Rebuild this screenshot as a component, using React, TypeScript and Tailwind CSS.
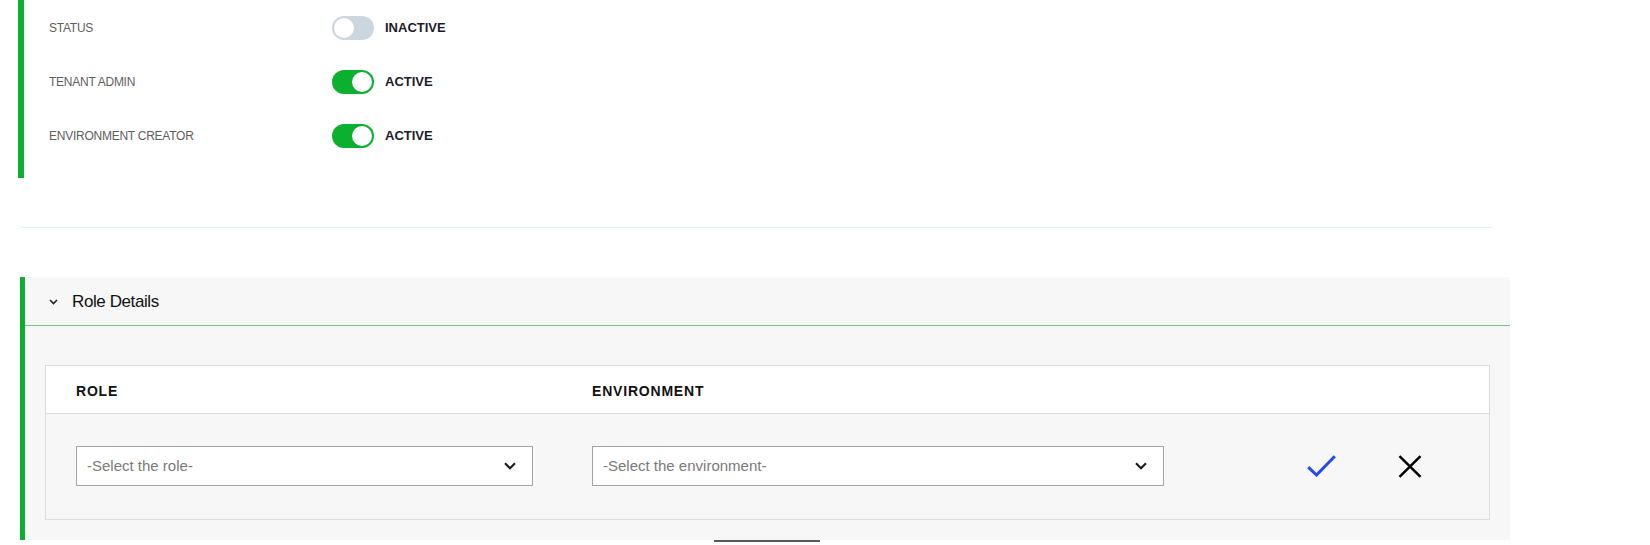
import React from "react";

type FlagRow = { label: string; active: boolean };

const flags: FlagRow[] = [
  { label: "STATUS", active: false },
  { label: "TENANT ADMIN", active: true },
  { label: "ENVIRONMENT CREATOR", active: true },
];

function Toggle({ on }: { on: boolean }) {
  return (
    <div
      className={
        on
          ? "w-[42px] h-[24px] rounded-full bg-[#0cb030] p-[2px] flex justify-end"
          : "w-[42px] h-[24px] rounded-full bg-[#cdd5df] p-[2px] flex justify-start"
      }
    >
      <div className="w-[20px] h-[20px] rounded-full bg-white" />
    </div>
  );
}

function SelectChevron() {
  return (
    <svg width="12" height="8" viewBox="0 0 12 8" fill="none">
      <path d="M1 1.2 L6 6.2 L11 1.2" stroke="#1a1a1a" strokeWidth="2.1" />
    </svg>
  );
}

function FakeSelect({ placeholder, width }: { placeholder: string; width: string }) {
  return (
    <div
      className={`${width} h-[40px] border border-[#a3a3a3] bg-white flex items-center justify-between pl-[10px] pr-[16px]`}
    >
      <span className="mt-[1px] text-[15px] text-[#7a7a7a]">{placeholder}</span>
      <SelectChevron />
    </div>
  );
}

export default function App() {
  return (
    <div className="w-[1650px] h-[545px] bg-white overflow-hidden font-['Liberation_Sans',Arial,sans-serif]">
      {/* user flags */}
      <section className="ml-[18px] w-[600px] border-l-[6px] border-[#0cb030] pb-[16px]">
        {flags.map((f) => (
          <div key={f.label} className="h-[54px] flex items-center pl-[25px]">
            <span className="mt-[2px] w-[283px] text-[12px] tracking-[-0.25px] text-[#5e5e5e]">{f.label}</span>
            <div className="mt-[1px]">
              <Toggle on={f.active} />
            </div>
            <span className="mt-[2px] ml-[11px] text-[13px] font-bold text-[#1b1b2a]">
              {f.active ? "ACTIVE" : "INACTIVE"}
            </span>
          </div>
        ))}
      </section>

      <div className="mt-[49px] ml-[20px] w-[1473px] h-px bg-[#e2f4ea]" />

      {/* role details */}
      <section className="mt-[49px] ml-[20px] w-[1490px] border-l-[5px] border-[#0cb030] bg-[#f7f7f7]">
        <div className="h-[49px] flex items-center border-b border-[#74c483] pl-[24px]">
          <svg width="9" height="6" viewBox="0 0 9 6" fill="none" className="mt-[1px]">
            <path d="M1 1 L4.5 4.5 L8 1" stroke="#222" strokeWidth="1.6" />
          </svg>
          <span className="mt-[2px] ml-[14px] text-[17px] tracking-[-0.4px] text-[#111]">Role Details</span>
        </div>

        <div className="pt-[39px] px-[20px] pb-[20px]">
          <div className="border border-[#dcdcdc]">
            <div className="h-[48px] bg-white border-b border-[#dcdcdc] flex items-center pl-[30px] pt-[3px] text-[14px] font-bold tracking-[0.8px] text-[#111]">
              <span className="w-[516px]">ROLE</span>
              <span>ENVIRONMENT</span>
            </div>
            <div className="flex items-center pl-[30px] pt-[32px] pb-[33px] bg-[#f7f7f7]">
              <FakeSelect placeholder="-Select the role-" width="w-[457px]" />
              <div className="ml-[59px]">
                <FakeSelect placeholder="-Select the environment-" width="w-[572px]" />
              </div>
              <button type="button" className="ml-[143px] flex items-center">
                <svg width="29" height="22" viewBox="0 0 29 22" fill="none">
                  <path d="M1.2 12.2 L9.5 20 L27.8 1.2" stroke="#2448f4" strokeWidth="3" />
                </svg>
              </button>
              <button type="button" className="ml-[62px] flex items-center">
                <svg width="24" height="23" viewBox="0 0 24 23" fill="none">
                  <path d="M1.5 1.2 L22.5 21.8 M22.5 1.2 L1.5 21.8" stroke="#000" strokeWidth="2.5" />
                </svg>
              </button>
            </div>
          </div>
        </div>
      </section>

      <div className="ml-[714px] w-[106px] h-[6px] border-t-2 border-[#5a5a5a] bg-white" />
    </div>
  );
}
